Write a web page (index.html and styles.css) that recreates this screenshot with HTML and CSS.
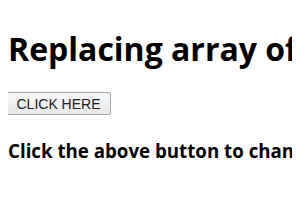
FILE: index.html
```html
<!DOCTYPE html>
<html lang="en">
<head>
  <meta charset="UTF-8" />
  <title>Replacing array of object</title>
  <link rel="stylesheet" href="styles.css">
</head>
<body>
  <h1 class="title">Replacing array of object property name</h1>
  <button class="btn">CLICK HERE</button>
  <h3 class="result">Click the above button to change the property name</h3>
</body>
</html>
```

FILE: styles.css
```css
body {
  margin: 8px;
  font-family: 'Open Sans', sans-serif;
  color: #000;
  background: #fff;
  white-space: nowrap;
  overflow: hidden;
}

.title {
  font-size: 32px;
  font-weight: bold;
  margin: 19px 0 22px;
}

.btn {
  display: block;
  margin-left: -2px;
  font-family: 'Liberation Sans', Arial, sans-serif;
  font-size: 14px;
  color: #222;
  background: linear-gradient(#f7f7f7, #e8e8e8);
  border: 1px solid #a6a6a6;
  border-radius: 2px;
  padding: 0 9px;
  width: 105px;
  height: 23px;
}

.result {
  font-size: 18.72px;
  font-weight: bold;
  margin: 23px 0;
}
```
